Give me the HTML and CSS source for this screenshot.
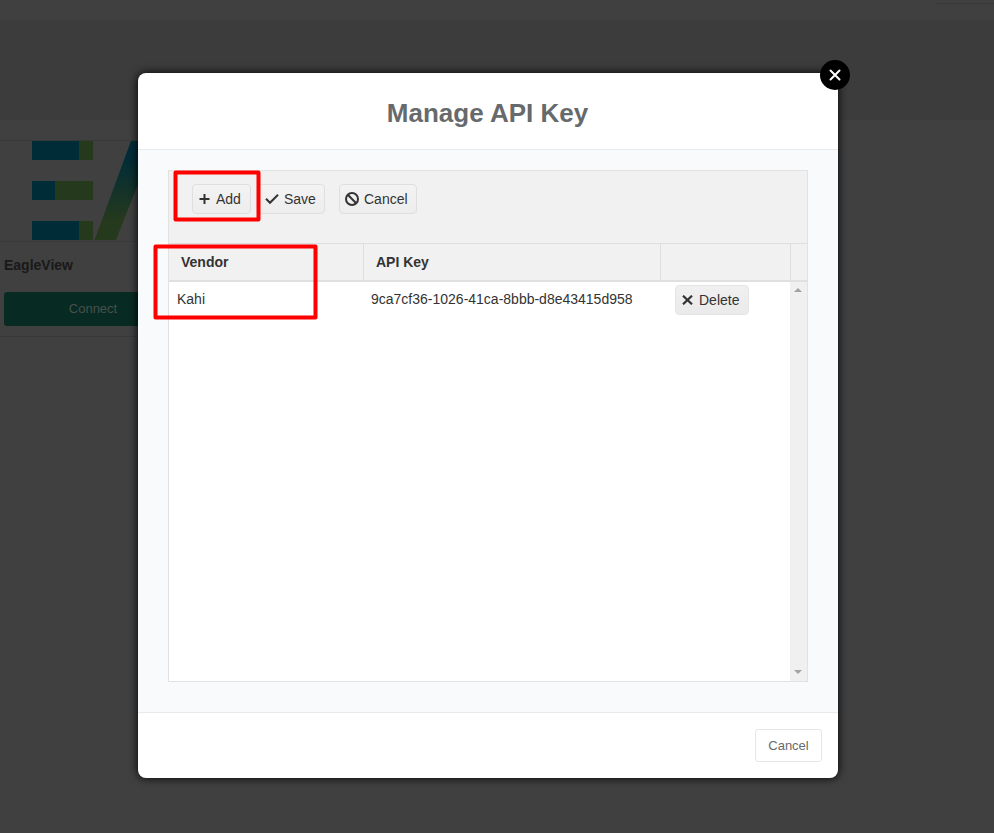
FILE: index.html
```html
<!DOCTYPE html>
<html lang="en">
<head>
<meta charset="utf-8">
<title>Manage API Key</title>
<link rel="stylesheet" href="styles.css">
</head>
<body>
<div class="page">
  <div class="topbar"><span class="topbar-edge"></span></div>
  <div class="banner"></div>
  <div class="vendor-card">
    <svg class="logo" width="160" height="100" viewBox="0 0 160 100">
      <defs>
        <linearGradient id="slant" x1="0" y1="0" x2="0" y2="1">
          <stop offset="0.15" stop-color="#002c38"/>
          <stop offset="0.8" stop-color="#25391d"/>
        </linearGradient>
      </defs>
      <path fill="#002c38" d="M32 0h47v19H32zM32 40h23v19H32zM32 80h47v19H32z"/>
      <path fill="#25391d" d="M79 0h14v19H79zM55 40h38v19H55zM79 80h14v19H79z"/>
      <path fill="url(#slant)" d="M131 0h24L116 99H94.500z"/>
    </svg>
    <div class="vendor-name">EagleView</div>
    <div class="connect">Connect</div>
  </div>
</div>

<div class="modal">
  <header class="modal-header"><h1>Manage API Key</h1></header>
  <main class="modal-body">
    <div class="grid">
      <div class="toolbar">
        <button class="btn add"><svg width="12" height="12" viewBox="0 0 12 12"><path d="M5.500 1v10M.5 6h10" fill="none" stroke="#333" stroke-width="2"/></svg>Add</button>
        <button class="btn save"><svg width="14" height="12" viewBox="0 0 14 12"><path d="M1 5.800l4 4L13 1.800" fill="none" stroke="#333" stroke-width="2"/></svg>Save</button>
        <button class="btn cancel"><svg width="14" height="14" viewBox="0 0 14 14"><path d="M2.800 2.800l8.400 8.400" stroke="#333" stroke-width="2"/><circle cx="7" cy="7" r="6" fill="none" stroke="#333" stroke-width="2"/></svg>Cancel</button>
      </div>
      <div class="columns">
        <div class="th">Vendor</div>
        <div class="th">API Key</div>
        <div class="th"></div>
        <div class="th"></div>
      </div>
      <div class="rows">
        <div class="td">Kahi</div>
        <div class="td">9ca7cf36-1026-41ca-8bbb-d8e43415d958</div>
        <div class="td action"><button class="btn delete"><svg width="11" height="10" viewBox="0 0 11 10"><path d="M1 .7l9 8.600M10 .7L1 9.300" fill="none" stroke="#333" stroke-width="2.200"/></svg>Delete</button></div>
        <div class="scrollbar">
          <svg width="8" height="4" viewBox="0 0 8 4"><path fill="#a3a3a3" d="M0 4l4-4 4 4z"/></svg>
          <svg width="8" height="4" viewBox="0 0 8 4"><path fill="#a3a3a3" d="M0 0h8L4 4z"/></svg>
        </div>
      </div>
    </div>
  </main>
  <footer class="modal-footer"><button class="close-btn">Cancel</button></footer>
  <div class="close"><svg width="12" height="12" viewBox="0 0 12 12"><path d="M1.500 1.500l9 9M10.500 1.500l-9 9" fill="none" stroke="#fff" stroke-width="2" stroke-linecap="round"/></svg></div>
  <svg class="marks" width="180" height="160" viewBox="0 0 180 160">
    <g fill="none" stroke="#f00" stroke-width="4" stroke-linejoin="round">
      <rect x="22.500" y="9.500" width="83" height="47"/>
      <rect x="2.500" y="83.500" width="160" height="71"/>
    </g>
  </svg>
</div>
</body>
</html>
```
FILE: styles.css
```css
* { box-sizing: border-box; }
body {
  margin: 0;
  height: 833px;
  overflow: hidden;
  position: relative;
  background: #404040;
  font-family: "Liberation Sans", Arial, sans-serif;
  font-size: 14px;
  color: #333;
}
svg { display: block; flex: none; }
button { font-family: inherit; margin: 0; }

.topbar { height: 20px; display: flex; justify-content: flex-end; }
.topbar-edge { width: 58px; height: 4px; border-bottom: 1px solid #383838; }
.banner { height: 100px; background: #3c3c3c; }
.vendor-card {
  width: 250px;
  height: 197px;
  margin-top: 20px;
  border-top: 1px solid #393939;
  border-bottom: 1px solid #393939;
}
.vendor-name {
  height: 51px;
  padding: 15px 4px 0;
  border-top: 1px solid #393939;
  line-height: 16px;
  font-weight: bold;
  color: #191919;
}
.connect {
  width: 178px;
  height: 34px;
  margin-left: 4px;
  border-radius: 3px;
  background: #072b22;
  color: #4a4f4e;
  font-size: 13px;
  line-height: 33px;
  text-align: center;
}

.modal {
  position: absolute;
  left: 138px;
  top: 73px;
  width: 700px;
  height: 705px;
  display: flex;
  flex-direction: column;
  border-radius: 8px;
  background: #fff;
  box-shadow: 0 0 10px #000;
}
.modal-header { height: 77px; border-bottom: 1px solid #e7eaec; }
h1 {
  margin: 0;
  padding: 25px 1px 0 0;
  font-size: 26px;
  line-height: 30px;
  text-align: center;
  color: #676a6c;
}
.modal-body { height: 562px; padding: 20px 30px 30px; background: #f8fafc; }
.grid { height: 512px; border: 1px solid #e2e2e2; background: #fff; }
.toolbar {
  height: 72px;
  padding: 13px 0 0 23px;
  display: flex;
  align-items: flex-start;
  background: #f1f1f1;
}
.btn {
  height: 30px;
  padding: 0 0 0 6px;
  display: flex;
  align-items: center;
  gap: 6px;
  border: 1px solid #dfdfdf;
  border-radius: 4px;
  background: linear-gradient(#f3f3f3, #ededed);
  color: #333;
  font-size: 14px;
}
.add { width: 59px; gap: 5px; }
.save { width: 67px; margin-left: 7px; gap: 5px; }
.cancel { width: 78px; margin-left: 14px; gap: 5px; padding-left: 5px; }
.columns {
  height: 39px;
  display: grid;
  grid-template-columns: 194px 297px 130px 1fr;
  border-top: 1px solid #dedede;
  border-bottom: 2px solid #e0e0e0;
  background: #f1f1f1;
}
.th {
  padding: 10px 0 0 12px;
  border-left: 1px solid #dedede;
  line-height: 16px;
  font-weight: bold;
}
.th:first-child { border-left-color: transparent; padding-left: 11px; }
.rows {
  height: 399px;
  display: grid;
  grid-template-columns: 194px 297px 130px 1fr;
}
.td { padding: 9px 0 0 8px; line-height: 16px; }
.action { padding: 3px 0 0 15px; }
.delete { width: 74px; gap: 6px; border-color: #e5e5e5; background: linear-gradient(#f0f0f0, #eaeaea); }
.scrollbar {
  display: flex;
  flex-direction: column;
  justify-content: space-between;
  align-items: center;
  padding: 6px 1px 7px 0;
  background: #f0f0f0;
}
.modal-footer {
  height: 66px;
  padding: 16px 16px 0 0;
  display: flex;
  justify-content: flex-end;
  border-top: 1px solid #e7eaec;
  border-radius: 0 0 8px 8px;
}
.close-btn {
  width: 67px;
  height: 33px;
  padding: 0;
  border: 1px solid #e7e7e7;
  border-radius: 3px;
  background: #fff;
  color: #676a6c;
  font-size: 13px;
}
.close {
  position: absolute;
  left: 682px;
  top: -13px;
  width: 30px;
  height: 30px;
  display: flex;
  align-items: center;
  justify-content: center;
  border-radius: 50%;
  background: #000;
}
.marks { position: absolute; left: 15px; top: 90px; }
```
